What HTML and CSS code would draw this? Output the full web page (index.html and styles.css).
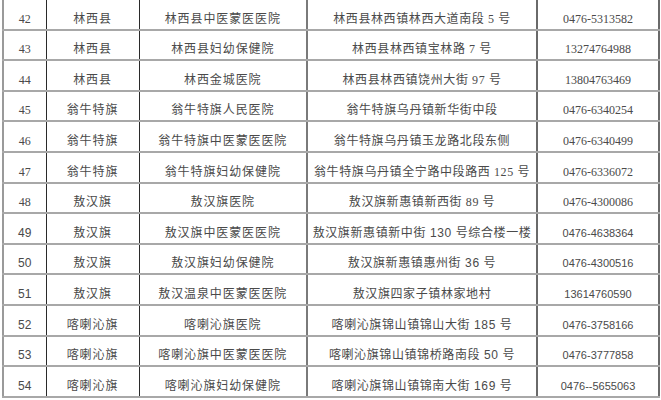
FILE: index.html
```html
<!DOCTYPE html>
<html lang="zh">
<head>
<meta charset="utf-8">
<link rel="stylesheet" href="styles.css">
</head>
<body>
<div class="wrap">
<table class="list">
<colgroup><col class="c1"><col class="c2"><col class="c3"><col class="c4"><col class="c5"></colgroup>
<tbody>
<tr><td>42</td><td>林西县</td><td>林西县中医蒙医医院</td><td>林西县林西镇林西大道南段 5 号</td><td>0476-5313582</td></tr>
<tr><td>43</td><td>林西县</td><td>林西县妇幼保健院</td><td>林西县林西镇宝林路 7 号</td><td>13274764988</td></tr>
<tr><td>44</td><td>林西县</td><td>林西金城医院</td><td>林西县林西镇饶州大街 97 号</td><td>13804763469</td></tr>
<tr><td>45</td><td>翁牛特旗</td><td>翁牛特旗人民医院</td><td>翁牛特旗乌丹镇新华街中段</td><td>0476-6340254</td></tr>
<tr><td>46</td><td>翁牛特旗</td><td>翁牛特旗中医蒙医医院</td><td>翁牛特旗乌丹镇玉龙路北段东侧</td><td>0476-6340499</td></tr>
<tr><td>47</td><td>翁牛特旗</td><td>翁牛特旗妇幼保健院</td><td>翁牛特旗乌丹镇全宁路中段路西 125 号</td><td>0476-6336072</td></tr>
<tr><td>48</td><td>敖汉旗</td><td>敖汉旗医院</td><td>敖汉旗新惠镇新西街 89 号</td><td>0476-4300086</td></tr>
<tr class="sans"><td>49</td><td>敖汉旗</td><td>敖汉旗中医蒙医医院</td><td>敖汉旗新惠镇新中街 130 号综合楼一楼</td><td>0476-4638364</td></tr>
<tr class="sans"><td>50</td><td>敖汉旗</td><td>敖汉旗妇幼保健院</td><td>敖汉旗新惠镇惠州街 36 号</td><td>0476-4300516</td></tr>
<tr class="sans"><td>51</td><td>敖汉旗</td><td>敖汉温泉中医蒙医医院</td><td>敖汉旗四家子镇林家地村</td><td>13614760590</td></tr>
<tr class="sans"><td>52</td><td>喀喇沁旗</td><td>喀喇沁旗医院</td><td>喀喇沁旗锦山镇锦山大街 185 号</td><td>0476-3758166</td></tr>
<tr class="sans"><td>53</td><td>喀喇沁旗</td><td>喀喇沁旗中医蒙医医院</td><td>喀喇沁旗锦山镇锦桥路南段 50 号</td><td>0476-3777858</td></tr>
<tr class="sans"><td>54</td><td>喀喇沁旗</td><td>喀喇沁旗妇幼保健院</td><td>喀喇沁旗锦山镇锦南大街 169 号</td><td>0476--5655063</td></tr>
</tbody>
</table>
</div>
</body>
</html>
```
FILE: styles.css
```css
html, body {
  margin: 0;
  padding: 0;
  background: #ffffff;
}
.wrap {
  width: 661px;
  height: 400px;
  overflow: hidden;
  padding-left: 2px;
  box-sizing: border-box;
}
.list {
  border-collapse: collapse;
  table-layout: fixed;
  width: 656px;
  margin-top: -2px;
  font-family: "Liberation Serif", "Noto Sans CJK SC", serif;
  font-size: 12px;
  color: #4a4a4a;
}
.c1 { width: 43px; }
.c2 { width: 93px; }
.c3 { width: 168px; }
.c4 { width: 230px; }
.c5 { width: 122px; }
.list td {
  height: 30.6px;
  box-sizing: border-box;
  padding: 0 0 3px 0;
  line-height: 14px;
  vertical-align: bottom;
  text-align: center;
  white-space: nowrap;
  overflow: hidden;
  letter-spacing: 0.9px;
  border-top: 2px solid #a8a8a8;
  border-bottom: 2px solid #a8a8a8;
}
.list td:nth-child(1) {
  border-left: 2px solid #9a9a9a;
  border-right: 1px solid #2a2a2a;
  letter-spacing: 0;
}
.list td:nth-child(2) {
  border-right: 1px solid #2a2a2a;
}
.list td:nth-child(3) {
  border-right: 2px solid #7a7a7a;
}
.list td:nth-child(4) {
  border-right: 2px solid #6a6a6a;
  letter-spacing: 0.6px;
}
.list td:nth-child(5) {
  border-right: 2px solid #6a6a6a;
  letter-spacing: 0;
}
.sans td {
  font-family: "Liberation Sans", "Noto Sans CJK SC", sans-serif;
}
.sans td:nth-child(5) {
  font-size: 11px;
}
```
